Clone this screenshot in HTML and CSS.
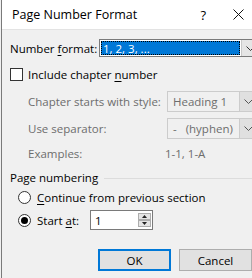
FILE: index.html
```html
<!DOCTYPE HTML>
<html>
  <head>
    <title>Page Number Format</title>
    <meta charset="utf-8" />
    <link rel="stylesheet" href="styles.css">
  </head>
  <body>
    <div class="dialog">
      <div class="titlebar">
        <span class="title">Page Number Format</span>
        <span class="spacer"></span>
        <span class="help">?</span>
        <svg class="close" width="11" height="11" viewBox="0 0 11 11">
          <path d="M0.5 0.5 L10.5 10.5 M10.5 0.5 L0.5 10.5" stroke="#111" stroke-width="1" fill="none"/>
        </svg>
      </div>
      <div class="body">
        <div class="format-row">
          <span class="label">Number <u>f</u>ormat:</span>
          <div class="combo focus">
            <span class="value"><span class="selected">1, 2, 3, ...</span></span>
            <span class="drop">
              <svg width="9" height="5" viewBox="0 0 9 5"><path d="M0.5 0.5 L4.5 4.5 L8.5 0.5" stroke="#333" fill="none"/></svg>
            </span>
          </div>
        </div>
        <label class="check">
          <span class="box"></span>
          <span>Include chapter <u>n</u>umber</span>
        </label>
        <div class="sub">
          <div class="sub-row">
            <span class="label">Chapter starts with style:</span>
            <div class="combo off">
              <span class="value">Heading 1</span>
              <span class="drop">
                <svg width="9" height="5" viewBox="0 0 9 5"><path d="M0.5 0.5 L4.5 4.5 L8.5 0.5" stroke="#555" fill="none"/></svg>
              </span>
            </div>
          </div>
          <div class="sub-row">
            <span class="label">Use separator:</span>
            <div class="combo off">
              <span class="value">-&nbsp;&nbsp;&nbsp;(hyphen)</span>
              <span class="drop">
                <svg width="9" height="5" viewBox="0 0 9 5"><path d="M0.5 0.5 L4.5 4.5 L8.5 0.5" stroke="#555" fill="none"/></svg>
              </span>
            </div>
          </div>
          <div class="sub-row examples">
            <span class="label">Examples:</span>
            <span class="example">1-1, 1-A</span>
          </div>
        </div>
        <div class="group-head">
          <span>Page numbering</span>
          <span class="rule"></span>
        </div>
        <label class="radio">
          <span class="dot"></span>
          <span><u>C</u>ontinue from previous section</span>
        </label>
        <div class="start-row">
          <label class="radio">
            <span class="dot on"></span>
            <span>Start <u>a</u>t:</span>
          </label>
          <div class="spin">
            <span class="spin-value">1</span>
            <span class="arrows">
              <span class="arrow"><svg width="5" height="3" viewBox="0 0 5 3"><path d="M0 3 L2.5 0 L5 3 Z" fill="#222"/></svg></span>
              <span class="arrow"><svg width="5" height="3" viewBox="0 0 5 3"><path d="M0 0 L2.5 3 L5 0 Z" fill="#222"/></svg></span>
            </span>
          </div>
        </div>
        <div class="buttons">
          <button class="default">OK</button>
          <button>Cancel</button>
        </div>
      </div>
    </div>
  </body>
</html>
```
FILE: styles.css
```css
body {
  margin: 0;
  background: #f0f0f0;
  font-family: "Open Sans", "Noto Sans", sans-serif;
  font-size: 11.5px;
  color: #000;
}
u {
  text-decoration-thickness: 1px;
  text-underline-offset: 2px;
}
.dialog {
  width: 252px;
  height: 278px;
  overflow: hidden;
  box-sizing: border-box;
  border-left: 1px solid #7a7a7a;
  margin-left: 1px;
  white-space: nowrap;
}
.titlebar {
  height: 30px;
  background: #fff;
  display: flex;
  align-items: center;
  padding-left: 10px;
  border-bottom: 1px solid #e3e3e3;
  box-sizing: border-box;
  font-size: 12.5px;
}
.titlebar .spacer {
  flex: 1;
}
.help {
  font-size: 13px;
  margin-right: 27px;
}
.close {
  margin-right: 9px;
}
.body {
  padding: 9px 0 0 8px;
}
.format-row {
  display: flex;
  align-items: center;
  height: 18px;
}
.format-row .label {
  flex: none;
  width: 89px;
}
.combo {
  flex: none;
  display: flex;
  box-sizing: border-box;
  border: 1px solid #adadad;
  background: #fff;
}
.combo .value {
  flex: 1;
  display: flex;
  align-items: center;
}
.combo .drop {
  width: 16px;
  display: flex;
  align-items: center;
  justify-content: center;
  border-left: 1px solid #c8c8c8;
  background: #e5e5e5;
}
.combo.focus {
  width: 160px;
  height: 18px;
  border-color: #7a7a7a;
}
.combo.focus .value {
  padding: 1px;
}
.combo.focus .selected {
  flex: 1;
  align-self: stretch;
  display: flex;
  align-items: center;
  background: #0078d7;
  color: #fff;
  padding-left: 2px;
  outline: 1px dotted #000;
  outline-offset: -1px;
}
.check {
  display: flex;
  align-items: center;
  gap: 5px;
  margin-top: 11px;
  height: 13px;
}
.box {
  width: 13px;
  height: 13px;
  box-sizing: border-box;
  border: 1px solid #333;
  background: #fff;
}
.sub {
  padding-left: 18px;
  margin-top: 10px;
  color: #6d6d6d;
}
.sub-row {
  display: flex;
  align-items: center;
  margin-bottom: 6px;
}
.sub-row .label {
  flex: none;
  width: 139px;
}
.combo.off {
  width: 90px;
  height: 21px;
  border-color: #cccccc;
  background: #f0f0f0;
  color: #6d6d6d;
}
.combo.off .value {
  padding-left: 5px;
}
.combo.off .drop {
  background: #e0e0e0;
  border-left-color: #cccccc;
}
.examples {
  height: 16px;
  margin-top: 2px;
}
.example {
  margin-left: -2px;
}
.group-head {
  display: flex;
  align-items: center;
  gap: 6px;
  margin-top: 8px;
  height: 16px;
}
.group-head .rule {
  flex: 1;
  border-top: 1px solid #dcdcdc;
  margin-top: 2px;
}
.radio {
  display: flex;
  align-items: center;
  gap: 6px;
  padding-left: 8px;
  margin-top: 4px;
  height: 16px;
}
.dot {
  width: 13px;
  height: 13px;
  box-sizing: border-box;
  border: 1px solid #333;
  border-radius: 50%;
  background: #fff;
  display: flex;
  align-items: center;
  justify-content: center;
}
.dot.on::after {
  content: "";
  width: 7px;
  height: 7px;
  border-radius: 50%;
  background: #000;
}
.start-row {
  display: flex;
  align-items: center;
  margin-top: 5px;
}
.start-row .radio {
  margin-top: 0;
  width: 71px;
}
.spin {
  display: flex;
  align-items: center;
  width: 63px;
  height: 20px;
  box-sizing: border-box;
  border: 1px solid #7a7a7a;
  background: #fff;
  margin-left: 1px;
}
.spin-value {
  flex: 1;
  padding-left: 4px;
}
.arrows {
  display: flex;
  flex-direction: column;
  margin-right: 1px;
}
.arrow {
  width: 13px;
  height: 7px;
  box-sizing: border-box;
  border: 1px solid #adadad;
  background: #e5e5e5;
  display: flex;
  align-items: center;
  justify-content: center;
}
.buttons {
  display: flex;
  gap: 8px;
  margin-top: 19px;
  margin-left: 88px;
}
.buttons button {
  width: 73px;
  height: 22px;
  box-sizing: border-box;
  font-family: inherit;
  font-size: 11.5px;
  background: #e1e1e1;
  border: 1px solid #adadad;
  padding: 0;
}
.buttons .default {
  border: 2px solid #0078d7;
}
```
